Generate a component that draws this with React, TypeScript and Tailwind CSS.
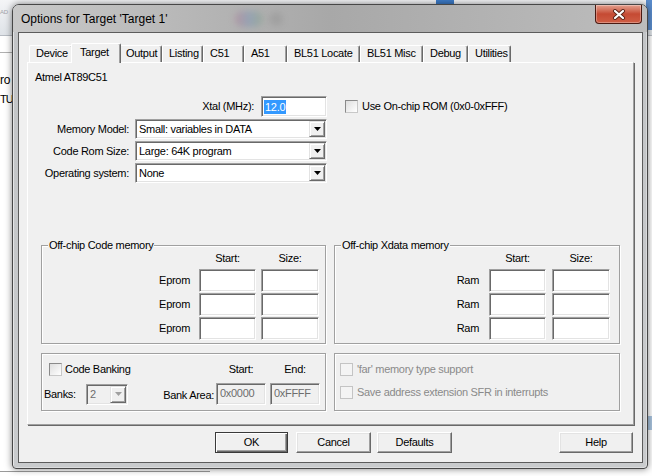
import React from 'react';

const sunken =
    'border border-t-[#a0a0a0] border-l-[#a0a0a0] border-r-white border-b-white shadow-[inset_1px_1px_0_#696969,inset_-1px_-1px_0_#e3e3e3]';
const raised =
    'border border-t-[#e3e3e3] border-l-[#e3e3e3] border-r-[#696969] border-b-[#696969] shadow-[inset_1px_1px_0_#fff,inset_-1px_-1px_0_#a0a0a0]';

const tabs = [
    { label: 'Device', cls: 'w-[44px]' },
    { label: 'Target', cls: 'w-[50px]', active: true },
    { label: 'Output', cls: 'w-[43px]' },
    { label: 'Listing', cls: 'w-[41px]' },
    { label: 'C51', cls: 'w-[41px]' },
    { label: 'A51', cls: 'w-[43px]' },
    { label: 'BL51 Locate', cls: 'w-[73px]' },
    { label: 'BL51 Misc', cls: 'w-[63px]' },
    { label: 'Debug', cls: 'w-[45px]' },
    { label: 'Utilities', cls: 'w-[43px]' },
];

function Check({ disabled }: { disabled?: boolean }) {
    return (
        <div
            className={`h-[13px] w-[13px] shrink-0 border ${
                disabled
                    ? 'border-[#c4c4c4] bg-[#f4f4f4]'
                    : 'border-t-[#8a8a8a] border-l-[#8a8a8a] border-r-[#c8c8c8] border-b-[#c8c8c8] bg-linear-to-br from-[#dedede] to-white'
            }`}
        />
    );
}

function Edit({
    className = '',
    disabled,
    children,
}: {
    className?: string;
    disabled?: boolean;
    children?: React.ReactNode;
}) {
    return (
        <div
            className={`${sunken} ${className} flex items-start pt-[2px] pl-[3px] leading-[14px] ${
                disabled ? 'bg-[#f0f0f0] text-[#6d6d6d]' : 'bg-white'
            }`}
        >
            {children}
        </div>
    );
}

function Combo({
    value,
    className = '',
    disabled,
}: {
    value: string;
    className?: string;
    disabled?: boolean;
}) {
    return (
        <div
            className={`${sunken} ${className} flex items-stretch ${
                disabled ? 'bg-[#f0f0f0] text-[#6d6d6d]' : 'bg-white'
            }`}
        >
            <div className="flex flex-1 items-center overflow-hidden whitespace-nowrap pl-[3px]">
                {value}
            </div>
            <div
                className={`m-[1px] flex w-[16px] items-center justify-center bg-[#f0f0f0] ${raised}`}
            >
                <svg width="7" height="4" viewBox="0 0 7 4">
                    <path d="M0 0h7L3.5 4z" fill={disabled ? '#a0a0a0' : '#000'} />
                </svg>
            </div>
        </div>
    );
}

function Group({
    legend,
    className = '',
    children,
}: {
    legend?: string;
    className?: string;
    children?: React.ReactNode;
}) {
    return (
        <div
            className={`relative border border-[#a0a0a0] shadow-[inset_1px_1px_0_#fff,1px_1px_0_#fff] ${className}`}
        >
            {legend && (
                <span className="absolute -top-[7px] left-[6px] bg-[#f0f0f0] px-[1px] leading-[13px]">
                    {legend}
                </span>
            )}
            {children}
        </div>
    );
}

function Btn({
    className = '',
    def,
    children,
}: {
    className?: string;
    def?: boolean;
    children: React.ReactNode;
}) {
    return (
        <div
            className={`flex h-[21px] items-center justify-center bg-[#f0f0f0] ${className} ${
                def
                    ? 'border border-[#3a3a3a] shadow-[inset_1px_1px_0_#fff,inset_-1px_-1px_0_#696969,inset_-2px_-2px_0_#a0a0a0]'
                    : 'border border-t-white border-l-white border-r-[#696969] border-b-[#696969] shadow-[inset_-1px_-1px_0_#a0a0a0,inset_1px_1px_0_#e3e3e3]'
            }`}
        >
            {children}
        </div>
    );
}

function FieldRow({ label, value }: { label: string; value: string }) {
    return (
        <div className="mt-[2px] flex h-[20px] items-center">
            <div className="w-[101px] text-right">{label}</div>
            <Combo value={value} className="ml-[6px] h-[20px] w-[192px]" />
        </div>
    );
}

function MemGroup({
    legend,
    label,
    pr,
    gap,
}: {
    legend: string;
    label: string;
    pr: string;
    gap: string;
}) {
    return (
        <Group legend={legend} className={`flex h-[99px] flex-col items-end ${pr}`}>
            <div className={`mt-[6px] flex h-[13px] leading-[13px] ${gap}`}>
                <div className="w-[57px] text-center">Start:</div>
                <div className="w-[58px] text-center">Size:</div>
            </div>
            {[0, 1, 2].map((i) => (
                <div
                    key={i}
                    className={`flex h-[23px] items-center ${gap} ${i === 0 ? 'mt-[4px]' : 'mt-[1px]'}`}
                >
                    <span className="-mr-[1px] pr-[5px]">{label}</span>
                    <Edit className="h-[23px] w-[57px]" />
                    <Edit className="h-[23px] w-[58px]" />
                </div>
            ))}
        </Group>
    );
}

function Backdrop() {
    return (
        <>
            <div className="absolute inset-x-0 top-0 h-[36px] border-b border-[#b7bcc3] bg-linear-to-b from-[#f4f5f7] to-[#dfe3e8]" />
            <span className="absolute left-0 top-[9px] text-[6px] leading-[7px] text-[#a0a4a8]">
                AD
            </span>
            <div className="absolute left-[436px] top-0 h-[4px] w-[18px] bg-[#3d7cc9]" />
            <div className="absolute right-0 top-0 h-[30px] w-[6px] bg-[#5a8ccc]" />
            <div className="absolute left-0 top-[52px] h-px w-[14px] bg-[#b0b0b0]" />
            <span className="absolute left-0 top-[73px] text-[12px] leading-[14px]">ro</span>
            <span className="absolute left-0 top-[92px] text-[11px] leading-[14px] tracking-[-1px]">
                TU
            </span>
            <div className="absolute left-0 top-[471px] h-px w-[210px] bg-[#9a9a9a]" />
            <div className="absolute right-0 top-[416px] h-[14px] w-[6px] bg-[#a9c4df]" />
        </>
    );
}

export default function App() {
    return (
        <div className="relative h-[476px] w-[652px] overflow-hidden bg-white font-['Liberation_Sans',Arial,sans-serif] text-[11px] tracking-[-0.3px] text-black">
            <Backdrop />

            {/* dialog window */}
            <div className="absolute left-[12px] top-[4px] flex h-[465px] w-[636px] flex-col rounded-t-[7px] rounded-b-[4px] border border-[#474747] bg-linear-to-b from-[#c2c4c6] to-[#c9cbcd] shadow-[0_0_7px_rgba(0,0,0,0.5),inset_1px_1px_0_rgba(255,255,255,0.55),inset_-1px_-1px_0_rgba(255,255,255,0.35)]">
                <div className="relative flex h-[27px] shrink-0 items-center rounded-t-[6px] bg-linear-to-r from-[#c9c9c9] via-[#a8a8a8] to-[#bdbdbd] pl-[8px]">
                    <span className="mt-[1px] text-[12px] tracking-normal">
                        Options for Target 'Target 1'
                    </span>
                    <div className="absolute left-[222px] top-[6px] h-[16px] w-[28px] rounded-full bg-linear-to-r from-[#b07a93] via-[#7b95b8] to-[#86a386] opacity-50 blur-[3px]" />
                    <div className="absolute left-[256px] top-[7px] h-[14px] w-[14px] rounded-full bg-[#8d8d8d] opacity-40 blur-[3px]" />
                    <div className="absolute right-[5px] top-0 flex h-[19px] w-[47px] items-center justify-center rounded-b-[4px] border border-t-0 border-[#4a1a12] bg-linear-to-b from-[#e3a08f] via-[#c54a33] to-[#cf5e45] shadow-[inset_0_0_0_1px_rgba(255,255,255,0.3)]">
                        <svg width="14" height="11" viewBox="0 0 14 11">
                            <path
                                d="M3 2l8 7M11 2l-8 7"
                                stroke="#5a2418"
                                strokeWidth="4"
                                strokeLinecap="round"
                            />
                            <path
                                d="M3 2l8 7M11 2l-8 7"
                                stroke="#fff"
                                strokeWidth="2.2"
                                strokeLinecap="round"
                            />
                        </svg>
                    </div>
                </div>

                {/* client area */}
                <div className="ml-[5px] mr-[4px] flex h-[431px] flex-col border border-[#5c5c5c] bg-[#f0f0f0]">
                    <div className="mt-[10px] flex h-[19px] items-end pl-[10px]">
                        {tabs.map((t) =>
                            t.active ? (
                                <div
                                    key={t.label}
                                    className={`relative z-10 -mx-[2px] -mb-[1px] h-[20px] rounded-t-[2px] border-t border-l border-r border-t-white border-l-white border-r-[#696969] bg-[#f0f0f0] pl-[8px] leading-[16px] shadow-[inset_-1px_0_0_#a0a0a0] ${t.cls}`}
                                >
                                    {t.label}
                                </div>
                            ) : (
                                <div
                                    key={t.label}
                                    className={`h-[17px] rounded-t-[2px] border-t border-l border-r border-t-white border-l-white border-r-[#696969] pl-[6px] leading-[15px] shadow-[inset_-1px_0_0_#a0a0a0] ${t.cls}`}
                                >
                                    {t.label}
                                </div>
                            ),
                        )}
                    </div>

                    {/* tab page */}
                    <div className="ml-[8px] flex h-[363px] w-[607px] flex-col border border-t-white border-l-white border-r-[#a0a0a0] border-b-[#a0a0a0] shadow-[1px_1px_0_#696969]">
                        <div className="ml-[7px] mt-[8px] h-[13px] leading-[13px]">
                            Atmel AT89C51
                        </div>
                        <div className="mt-[12px] flex h-[21px] items-center">
                            <div className="w-[226px] text-right">Xtal (MHz):</div>
                            <div
                                className={`ml-[7px] flex h-[21px] w-[66px] items-center bg-white pl-[2px] ${sunken}`}
                            >
                                <span className="bg-[#3399ff] px-[1px] leading-[14px] text-white">
                                    12.0
                                </span>
                            </div>
                            <div className="ml-[18px] flex items-center">
                                <Check />
                                <span className="ml-[4px]">Use On-chip ROM (0x0-0xFFF)</span>
                            </div>
                        </div>
                        <FieldRow label="Memory Model:" value="Small: variables in DATA" />
                        <FieldRow label="Code Rom Size:" value="Large: 64K program" />
                        <FieldRow label="Operating system:" value="None" />

                        <div className="ml-[13px] mt-[62px] flex gap-[8px]">
                            <div className="w-[285px]">
                                <MemGroup
                                    legend="Off-chip Code memory"
                                    label="Eprom"
                                    pr="pr-[6px]"
                                    gap="gap-[5px]"
                                />
                            </div>
                            <div className="w-[286px]">
                                <MemGroup
                                    legend="Off-chip Xdata memory"
                                    label="Ram"
                                    pr="pr-[9px]"
                                    gap="gap-[6px]"
                                />
                            </div>
                        </div>

                        <div className="ml-[13px] mt-[9px] flex gap-[8px]">
                            <Group className="flex h-[58px] w-[285px] flex-col">
                                <div className="mt-[9px] flex h-[13px] items-center pl-[7px] pr-[5px]">
                                    <Check />
                                    <span className="ml-[3px]">Code Banking</span>
                                    <div className="ml-auto flex gap-[4px]">
                                        <div className="w-[50px] text-center">Start:</div>
                                        <div className="w-[50px] text-center">End:</div>
                                    </div>
                                </div>
                                <div className="mt-[7px] flex h-[22px] items-center pl-[2px] pr-[5px]">
                                    <span className="w-[42px]">Banks:</span>
                                    <Combo disabled value="2" className="h-[21px] w-[42px]" />
                                    <span className="ml-auto mr-[2px] mt-[3px]">Bank Area:</span>
                                    <Edit disabled className="h-[22px] w-[50px]">
                                        0x0000
                                    </Edit>
                                    <Edit disabled className="ml-[4px] h-[22px] w-[50px]">
                                        0xFFFF
                                    </Edit>
                                </div>
                            </Group>
                            <Group className="flex h-[58px] w-[286px] flex-col pl-[5px] text-[#8a8a8a]">
                                <div className="mt-[9px] flex h-[13px] items-center">
                                    <Check disabled />
                                    <span className="ml-[4px]">'far' memory type support</span>
                                </div>
                                <div className="mt-[10px] flex h-[13px] items-center">
                                    <Check disabled />
                                    <span className="ml-[4px]">
                                        Save address extension SFR in interrupts
                                    </span>
                                </div>
                            </Group>
                        </div>
                    </div>

                    <div className="mt-[7px] flex">
                        <Btn def className="ml-[196px] w-[73px]">
                            OK
                        </Btn>
                        <Btn className="ml-[8px] w-[75px]">Cancel</Btn>
                        <Btn className="ml-[6px] w-[75px]">Defaults</Btn>
                        <Btn className="ml-[107px] w-[74px]">Help</Btn>
                    </div>
                </div>
            </div>
        </div>
    );
}
